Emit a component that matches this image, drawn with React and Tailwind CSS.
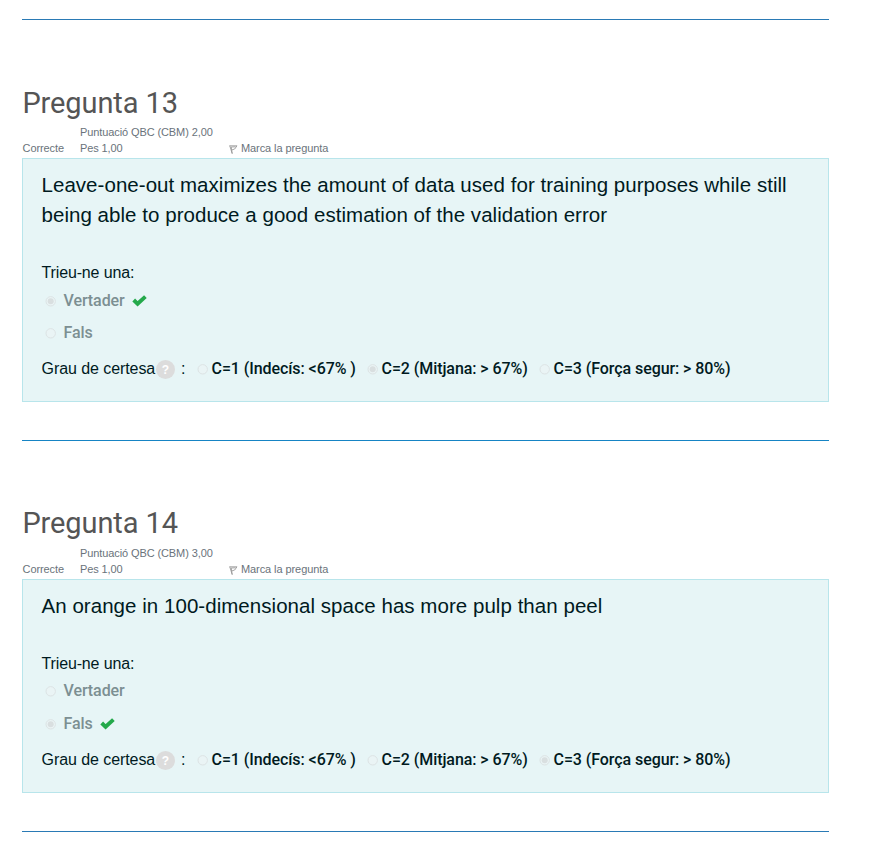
const ARIAL = "font-['Liberation_Sans',Arial,sans-serif]";

function Rule({ color }) {
  return <div className={`h-px w-[807px] ${color}`} />;
}

function Radio({ checked }) {
  return (
    <svg className="block size-[11px] shrink-0" viewBox="0 0 11 11" aria-hidden="true">
      <circle cx="5.7" cy="5.3" r="4.7" fill="#eaf4f5" stroke="#dce3e4" strokeWidth="1" />
      {checked && <circle cx="5.7" cy="5.3" r="3" fill="#d9dfe0" />}
    </svg>
  );
}

function Check() {
  return (
    <svg className="mb-px ml-[7px] block h-[12px] w-[15px]" viewBox="0 0 15 12" aria-hidden="true">
      <path d="M1.7 5 L5.6 8.8 L13.4 1.6" fill="none" stroke="#24a94b" strokeWidth="3.9" />
    </svg>
  );
}

function Flag() {
  return (
    <svg className="mt-[2px] mr-[3px] block h-[9px] w-[9px]" viewBox="0 0 9 9" aria-hidden="true">
      <path d="M0.4 0.8 H8 L5.7 4 L3 4.9 M0.8 0.8 L3.2 8.6 M2.2 2 L3.2 8.6 M2.2 2 L6.6 1.8" fill="none" stroke="#8f8f8f" strokeWidth="0.8" />
    </svg>
  );
}

function Answer({ label, chosen, height }) {
  return (
    <div className={`flex items-center pl-[3.5px] text-[16px] font-medium text-[#7c8f92] ${height}`}>
      <Radio checked={chosen} />
      <span className="ml-[7.5px] tracking-[-0.08px]">{label}</span>
      {chosen && <Check />}
    </div>
  );
}

const LEVELS = [
  { text: 'C=1 (Indecís: <67% )', width: 'w-[170px]' },
  { text: 'C=2 (Mitjana: > 67%)', width: 'w-[172px]' },
  { text: 'C=3 (Força segur: > 80%)', width: 'w-[200px]' },
];

function Question({ number, score, lines, answer, level, headingGap = 'mb-px', firstRow = 'h-8', secondRow = 'h-8' }) {
  return (
    <section className="w-[807px]">
      <h3 className={`h-[40px] pl-[0.4px] text-[29px] leading-[40px] tracking-[-0.1px] text-[#555] ${headingGap}`}>Pregunta {number}</h3>
      <div className={`flex h-[34px] items-end pl-[0.6px] text-[11px] leading-4 tracking-[-0.1px] text-[#6a737b] ${ARIAL}`}>
        <div className="mb-[2px] w-[57.4px]">Correcte</div>
        <div className="mb-[2px] w-[148.6px]">
          <div>Puntuació QBC (CBM) {score}</div>
          <div>Pes 1,00</div>
        </div>
        <div className="mb-[2px] flex items-center">
          <Flag />
          <span className="ml-[0.4px] tracking-[-0.08px]">Marca la pregunta</span>
        </div>
      </div>
      <div className={`border border-[#b8e5eb] bg-[#e7f5f6] pt-[11px] pr-[19px] pb-[20px] pl-[18.5px] text-[#001a1e] ${ARIAL}`}>
        <div className="mb-[31px] text-[20.5px] leading-[30px] tracking-[0.042px] whitespace-nowrap">
          {lines.map((line) => (
            <p key={line}>{line}</p>
          ))}
        </div>
        <div className="text-[16px] leading-6 tracking-[-0.14px]">Trieu-ne una:</div>
        <div className="font-[Roboto,sans-serif]">
          <Answer label="Vertader" chosen={answer === 'Vertader'} height={firstRow} />
          <Answer label="Fals" chosen={answer === 'Fals'} height={secondRow} />
        </div>
        <div className="mt-2 flex h-6 items-center text-[16px] leading-6 whitespace-nowrap">
          <span className="w-[114.5px] tracking-[-0.07px]">Grau de certesa</span>
          <span className="mt-[1px] flex size-[19px] items-center justify-center rounded-full bg-[#dcdcdc] text-[12px] font-bold text-white">?</span>
          <span className="ml-[6px] w-[16px]">:</span>
          <div className="flex font-[Roboto,sans-serif] font-medium tracking-[-0.07px]">
            {LEVELS.map((item, index) => (
              <label key={item.text} className={`flex items-center gap-[3.5px] ${item.width}`}>
                <Radio checked={level === index} />
                <span>{item.text}</span>
              </label>
            ))}
          </div>
        </div>
      </div>
    </section>
  );
}

export default function App() {
  return (
    <main className="flex h-[844px] w-[874px] flex-col overflow-hidden bg-white pt-[19px] pl-[22px] font-[Roboto,sans-serif]">
      <Rule color="bg-[#2a7ab5]" />
      <div className="mt-[63px] mb-[38px]">
        <Question
          number={13}
          score="2,00"
          lines={[
            'Leave-one-out maximizes the amount of data used for training purposes while still',
            'being able to produce a good estimation of the validation error',
          ]}
          answer="Vertader"
          level={1}
        />
      </div>
      <Rule color="bg-[#1684c4]" />
      <div className="mt-[62px] mb-[38px]">
        <Question
          number={14}
          score="3,00"
          lines={['An orange in 100-dimensional space has more pulp than peel']}
          answer="Fals"
          level={2}
          headingGap="mb-[2px]"
          firstRow="h-[30px]"
          secondRow="h-[34px] pt-[2px]"
        />
      </div>
      <Rule color="bg-[#2a7ab5]" />
    </main>
  );
}
